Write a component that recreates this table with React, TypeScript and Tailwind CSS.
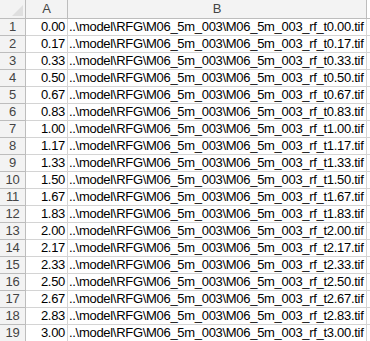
import React from "react";

const vals = ["0.00","0.17","0.33","0.50","0.67","0.83","1.00","1.17","1.33","1.50","1.67","1.83","2.00","2.17","2.33","2.50","2.67","2.83","3.00"];

export default function App() {
  return (
    <div className="w-[370px] h-[341px] overflow-hidden bg-white text-black font-['Liberation_Sans',Arial,sans-serif] text-[13px] tracking-[-0.3px]">
      <div className="flex h-[19px] bg-[#f3f3f3] border-b border-[#bdbdbd]">
        <div className="w-[26px] h-full border-r border-[#bdbdbd] relative">
          <div className="absolute right-[2px] bottom-[2px] w-0 h-0 border-l-[11px] border-l-transparent border-b-[11px] border-b-[#dfdfdf]" />
        </div>
        <div className="w-[42px] h-full border-r border-[#bdbdbd] flex items-center justify-center text-[#444]">A</div>
        <div className="w-[299px] h-full border-r border-[#bdbdbd] flex items-center justify-center text-[#444]">B</div>
        <div className="flex-1 bg-white" />
      </div>
      {vals.map((v, i) => (
        <div key={i} className="flex h-[17px]">
          <div className="w-[26px] h-full bg-[#f3f3f3] border-r border-b border-[#bdbdbd] flex items-center justify-center text-[#444]">{i + 1}</div>
          <div className="w-[42px] h-full border-r border-b border-[#d4d4d4] flex items-center justify-end pr-[2px]">{v}</div>
          <div className="w-[299px] h-full border-r border-b border-[#d4d4d4] flex items-center pl-[1px] whitespace-nowrap overflow-hidden">{`..\\model\\RFG\\M06_5m_003\\M06_5m_003_rf_t${v}.tif`}</div>
          <div className="flex-1 h-full border-b border-[#d4d4d4]" />
        </div>
      ))}
    </div>
  );
}
